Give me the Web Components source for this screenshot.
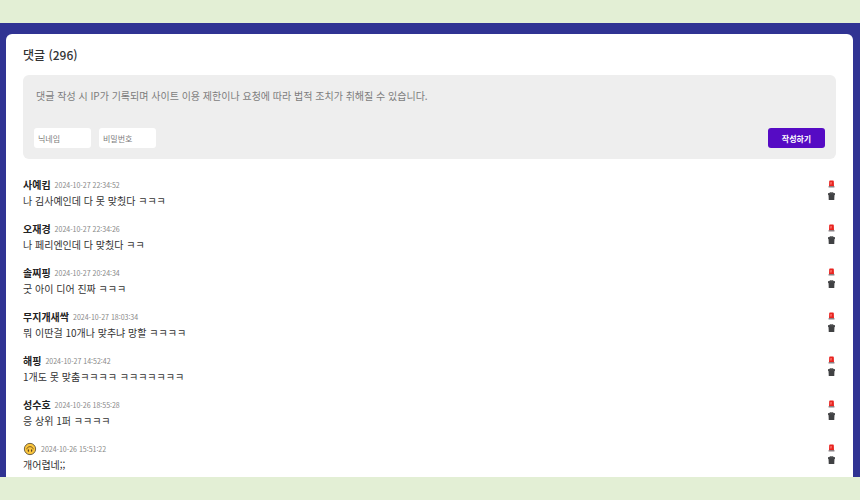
<!DOCTYPE html>
<html lang="ko">
<head>
<meta charset="UTF-8">
<meta name="viewport" content="width=device-width, initial-scale=1.0">
<title>댓글</title>
<style>
  body {
    margin: 0;
    background-color: #e3efd5;
    color: #333;
    font-family: "Noto Sans CJK KR", "Noto Sans", sans-serif;
    font-size: 10px;
  }
</style>
</head>
<body>
<comment-board>
  <comment-form slot="form"></comment-form>
</comment-board>

<script>
// Icons
const sirenIcon = `
  <svg viewBox="0 0 14 16" width="7" height="8" aria-hidden="true">
    <path d="M2 12 2.500 2Q2.600 1 4 1H10Q11.400 1 11.500 2L12 12Z" fill="#e8231f"/>
    <path d="M5 4H7.500L7 9H4.500Z" fill="#ff8077"/>
    <rect x="1" y="12" width="12" height="3" rx="1" fill="#8b7f83"/>
  </svg>`;
const trashIcon = `
  <svg viewBox="0 0 14 16" width="7" height="8" aria-hidden="true">
    <path d="M4 2V0.800H10V2" fill="none" stroke="#555" stroke-width="1.600"/>
    <rect x="0" y="2" width="14" height="4" rx="1" fill="#4a4b4d"/>
    <path d="M1 5H13L12.500 16H1.500Z" fill="#404143"/>
  </svg>`;
const faceIcon = `
  <svg viewBox="-1 -1 26 26" width="14" height="14" role="img" aria-label="거꾸로 웃는 얼굴">
    <circle cx="12" cy="12" r="10.500" fill="#fcc63c" stroke="#5b503c" stroke-width="1.600"/>
    <path d="M6 12.500C6.500 6 17.500 6 18 12.500" fill="none" stroke="#6b4d20" stroke-width="1.600"/>
    <ellipse cx="9" cy="15" rx="1.200" ry="2.500" fill="#5c4320"/>
    <ellipse cx="15" cy="15" rx="1.200" ry="2.500" fill="#5c4320"/>
  </svg>`;

const comments = [
  { name: '사예킴', date: '2024-10-27 22:34:52', text: '나 김사예인데 다 못 맞췄다 ㅋㅋㅋ' },
  { name: '오재경', date: '2024-10-27 22:34:26', text: '나 페리엔인데 다 맞췄다 ㅋㅋ' },
  { name: '솔찌핑', date: '2024-10-27 20:24:34', text: '굿 아이 디어 진짜 ㅋㅋㅋ' },
  { name: '무지개새싹', date: '2024-10-27 18:03:34', text: '뭐 이딴걸 10개나 맞추냐 망할 ㅋㅋㅋㅋ' },
  { name: '해핑', date: '2024-10-27 14:52:42', text: '1개도 못 맞춤ㅋㅋㅋㅋ ㅋㅋㅋㅋㅋㅋㅋ' },
  { name: '성수호', date: '2024-10-26 18:55:28', text: '응 상위 1퍼 ㅋㅋㅋㅋ' },
  { name: faceIcon, date: '2024-10-26 15:51:22', text: '개어렵네;;' },
];

// Comment writing form
class CommentForm extends HTMLElement {
  constructor() {
    super();
    this.attachShadow({ mode: 'open' });
  }

  connectedCallback() {
    this.shadowRoot.innerHTML = `
      <style>
        :host {
          display: block;
        }
        form {
          display: flex;
          flex-direction: column;
          gap: 8px;
          padding: 11px;
          border-radius: 6px;
          background-color: #eee;
        }
        textarea, input, button {
          box-sizing: border-box;
          margin: 0;
          border: 0;
          border-radius: 3px;
          font: inherit;
          outline: none;
        }
        textarea {
          display: block;
          width: 100%;
          height: 34px;
          padding: 2px;
          line-height: 16px;
          background: transparent;
          resize: none;
        }
        .row {
          display: flex;
          gap: 8px;
        }
        input, button {
          width: 57px;
          height: 20px;
          font-size: 8px;
        }
        input {
          padding: 1px 4px 0;
          background-color: #fff;
        }
        ::placeholder {
          color: #7c7c7c;
          opacity: 1;
        }
        button {
          margin-left: auto;
          padding: 0;
          background-color: #560bc4;
          color: #fff;
          font-weight: 700;
          cursor: pointer;
        }
      </style>
      <form>
        <textarea aria-label="댓글" placeholder="댓글 작성 시 IP가 기록되며 사이트 이용 제한이나 요청에 따라 법적 조치가 취해질 수 있습니다."></textarea>
        <div class="row">
          <input type="text" aria-label="닉네임" placeholder="닉네임">
          <input type="password" aria-label="비밀번호" placeholder="비밀번호">
          <button type="submit">작성하기</button>
        </div>
      </form>
    `;

    this.shadowRoot.querySelector('form').addEventListener('submit', (e) => {
      e.preventDefault();
    });
  }
}

customElements.define('comment-form', CommentForm);

// A single comment
class CommentItem extends HTMLElement {
  constructor() {
    super();
    this.attachShadow({ mode: 'open' });
  }

  connectedCallback() {
    this.shadowRoot.innerHTML = `
      <style>
        :host {
          display: flex;
          justify-content: space-between;
          line-height: 16px;
        }
        .head {
          display: flex;
          align-items: center;
          gap: 4px;
          height: 16px;
        }
        .name {
          display: flex;
          color: #222;
          font-weight: 700;
        }
        .date {
          color: #888;
          font-size: 7px;
        }
        .actions {
          display: flex;
          flex-direction: column;
          gap: 4px;
          padding: 3px 1px 0;
        }
        button {
          display: flex;
          padding: 0;
          border: 0;
          background: none;
          cursor: pointer;
        }
      </style>
      <div>
        <div class="head">
          <span class="name"><slot name="name"></slot></span>
          <span class="date"><slot name="date"></slot></span>
        </div>
        <div class="text"><slot></slot></div>
      </div>
      <div class="actions">
        <button class="report" type="button" aria-label="신고">${sirenIcon}</button>
        <button class="delete" type="button" aria-label="삭제">${trashIcon}</button>
      </div>
    `;

    this.shadowRoot.querySelector('.delete').addEventListener('click', () => {
      this.remove();
    });
  }
}

customElements.define('comment-item', CommentItem);

// Board with the title, the form and the list
class CommentBoard extends HTMLElement {
  constructor() {
    super();
    this.attachShadow({ mode: 'open' });
  }

  connectedCallback() {
    this.shadowRoot.innerHTML = `
      <style>
        :host {
          display: block;
          margin: 23px 0;
          padding: 11px 7px 0 6px;
          background-color: #303393;
        }
        .panel {
          padding: 11px 17px 4px;
          border-radius: 6px 6px 0 0;
          background-color: #fff;
        }
        h2 {
          margin: 0 0 10px;
          font-size: 12px;
          font-weight: 500;
          line-height: 20px;
        }
        .list {
          display: flex;
          flex-direction: column;
          gap: 12px;
          margin-top: 18px;
        }
        comment-item svg {
          display: block;
        }
      </style>
      <div class="panel">
        <h2>댓글 (296)</h2>
        <slot name="form"></slot>
        <div class="list">
          ${comments.map((c) => `
            <comment-item>
              <span slot="name">${c.name}</span>
              <span slot="date">${c.date}</span>
              ${c.text}
            </comment-item>`).join('')}
        </div>
      </div>
    `;
  }
}

customElements.define('comment-board', CommentBoard);
</script>
</body>
</html>
